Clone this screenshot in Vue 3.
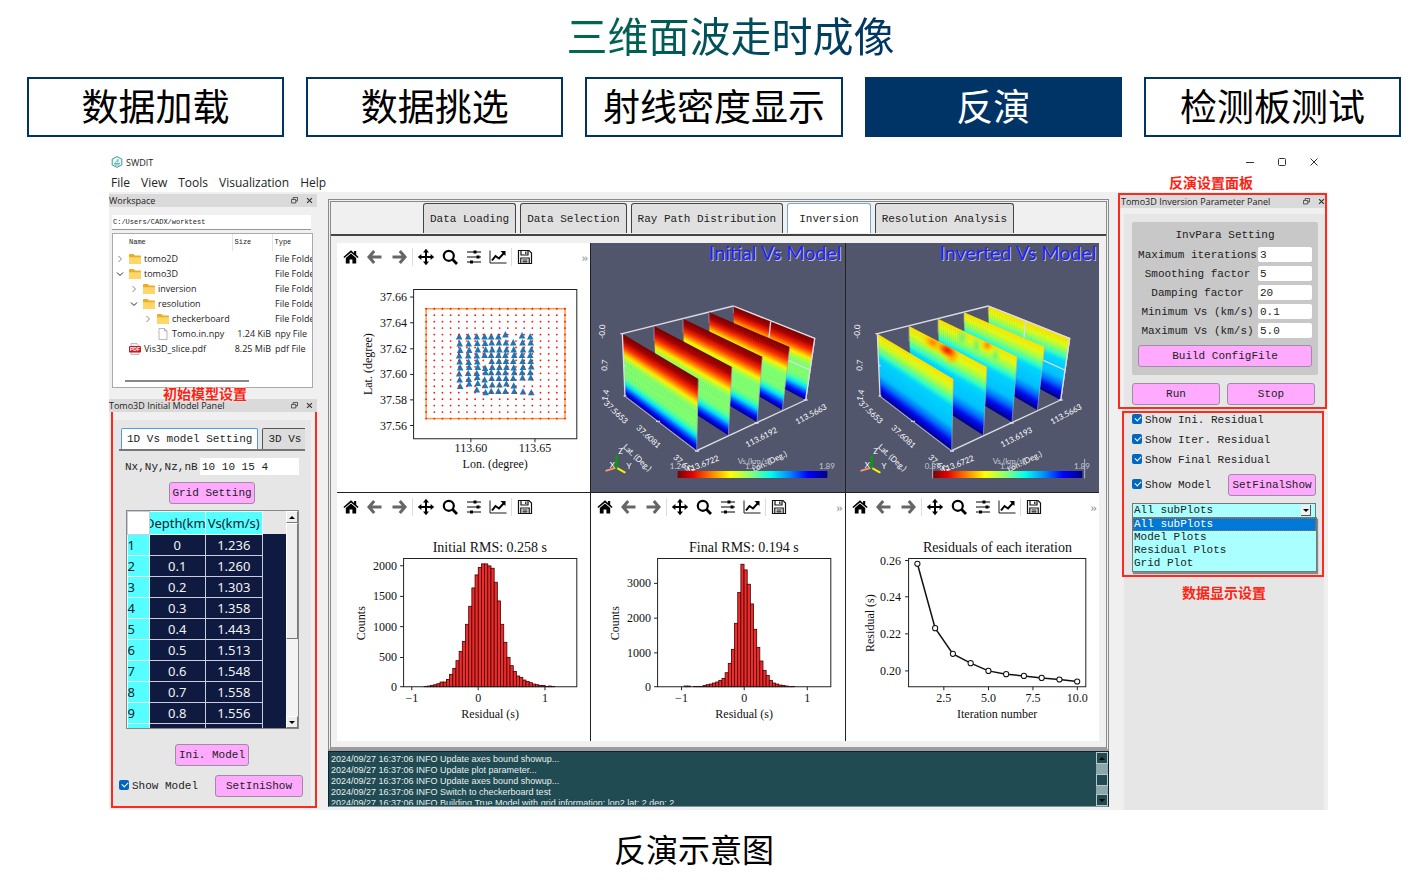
<script setup>
import { ref } from 'vue'

const steps = ['数据加载', '数据挑选', '射线密度显示', '反演', '检测板测试']
const menus = ['File', 'View', 'Tools', 'Visualization', 'Help']
const tabs = ['Data Loading', 'Data Selection', 'Ray Path Distribution', 'Inversion', 'Resolution Analysis']

const files = [
  { name: 'tomo2D', depth: 0, kind: 'folder', open: false, size: '', type: 'File Folder' },
  { name: 'tomo3D', depth: 0, kind: 'folder', open: true, size: '', type: 'File Folder' },
  { name: 'inversion', depth: 1, kind: 'folder', open: false, size: '', type: 'File Folder' },
  { name: 'resolution', depth: 1, kind: 'folder', open: true, size: '', type: 'File Folder' },
  { name: 'checkerboard', depth: 2, kind: 'folder', open: false, size: '', type: 'File Folder' },
  { name: 'Tomo.in.npy', depth: 2, kind: 'file', size: '1.24 KiB', type: 'npy File' },
  { name: 'Vis3D_slice.pdf', depth: 0, kind: 'pdf', size: '8.25 MiB', type: 'pdf File' },
]

const layers = [
  ['0', '1.236'], ['0.1', '1.260'], ['0.2', '1.303'], ['0.3', '1.358'], ['0.4', '1.443'],
  ['0.5', '1.513'], ['0.6', '1.548'], ['0.7', '1.558'], ['0.8', '1.556'],
]

const path = ref('C:/Users/CADX/worktest')
const gridSize = ref('10 10 15 4')
const params = ref([
  { id: 'iter', label: 'Maximum iterations', value: '3' },
  { id: 'smooth', label: 'Smoothing factor', value: '5' },
  { id: 'damp', label: 'Damping factor', value: '20' },
  { id: 'vmin', label: 'Minimum Vs (km/s)', value: '0.1' },
  { id: 'vmax', label: 'Maximum Vs (km/s)', value: '5.0' },
])
const shows = ['Show Ini. Residual', 'Show Iter. Residual', 'Show Final Residual']
const plotSets = ['All subPlots', 'Model Plots', 'Residual Plots', 'Grid Plot']
const plotSet = ref('All subPlots')

const logs = [
  'Update axes bound showup...',
  'Update plot parameter...',
  'Update axes bound showup...',
  'Switch to checkerboard test',
  'Building True Model with grid information: lon2 lat: 2 dep: 2',
]

/* station map */
const gridDots = []
for (let i = 0; i < 18; i++) for (let j = 0; j < 18; j++) gridDots.push([89 + i * 8.16, 37.7 + j * 6.45])
const stationCols = [
  [122, [66, 73, 79.5, 85, 91, 97, 103, 109, 115.5]],
  [131, [66, 73, 79.5, 85, 91.5, 96.5, 102.5, 108.5, 113]],
  [139.6, [66, 72.5, 79, 85, 91, 96.5, 102.5, 106.5, 112.5, 119]],
  [147.4, [66, 72.5, 79, 84.5, 97.5, 101.8, 109, 114.8, 121.8]],
  [154, [66, 72, 79, 84.5, 90.6, 96.5, 101.8, 107.5, 114, 120.5]],
  [161.2, [66, 72, 79, 84.5, 90.6, 96.5, 101.8, 107.5, 114, 120.5]],
  [168.2, [64, 72, 79, 84.5, 90.6, 96.5, 101.8, 107.5, 113, 120.5]],
  [176, [72, 79, 84.5, 90.6, 97, 101.8, 107.5, 115, 120.5]],
  [184.8, [65, 72, 79, 84.5, 90.6, 96.5, 101.8, 107, 121]],
  [193, [66, 72, 79, 84.5, 90.6, 96, 101.8, 107, 121.8]],
]
const stations = stationCols.flatMap(([x, ys]) => ys.map((y, i) => [x + ((i * 7) % 3) * 0.5, y]))
const latTicks = [['37.66', 26], ['37.64', 51.7], ['37.62', 77.7], ['37.60', 103.3], ['37.58', 128.7], ['37.56', 154.3]]

/* histograms: bar heights are in thirds of a drawing unit */
const hists = [
  {
    title: 'Initial RMS: 0.258 s', x0: 87, step: 3.18,
    yt: [['0', 165.5], ['500', 136.3], ['1000', 105.5], ['1500', 75.3], ['2000', 44.7]],
    xt: [['−1', 74.7], ['0', 141], ['1', 207.7]],
    bars: [1, 2, 4, 6, 9, 14, 14, 22, 37, 55, 78, 106, 136, 187, 241, 296, 335, 357, 368, 368, 362, 355, 313, 257, 187, 133, 88, 63, 46, 32, 28, 20, 16, 12, 8, 6, 4, 4, 1, 2, 1],
  },
  {
    title: 'Final RMS: 0.194 s', x0: 93, step: 3.15,
    yt: [['0', 165.5], ['1000', 131.7], ['2000', 97], ['3000', 62.3]],
    xt: [['−1', 90.4], ['0', 153], ['1', 216]],
    bars: [2, 2, 0, 1, 1, 1, 4, 6, 8, 11, 14, 19, 25, 42, 70, 112, 190, 282, 367, 350, 307, 248, 172, 118, 77, 49, 34, 19, 11, 8, 5, 4, 2, 1, 1],
  },
]

const resid = [42.7, 107, 132.7, 142, 149.7, 153, 154.7, 156.7, 158.3, 160.3].map((y, i) => [71.3 + i * 17.73, y])
const residLine = resid.map(p => p.join(',')).join(' ')

/* volume slices, back to front */
const slices = [
  [[431, 198], [675, 295], [648, 480], [436, 367]],
  [[358, 217], [600, 321], [578, 510], [363, 383]],
  [[280, 236], [518, 350], [502, 546], [286, 417]],
  [[193, 258], [427, 381], [416, 586], [200, 446]],
  [[98, 281], [326, 417], [321, 632], [106, 468]],
]
const ramps = {
  initial: [[0, 120, 0, 0], [0.1, 165, 0, 0], [0.2, 250, 40, 0], [0.28, 255, 150, 0], [0.34, 255, 240, 0], [0.4, 170, 255, 70], [0.46, 128, 255, 112], [0.68, 128, 255, 112], [0.75, 60, 255, 180], [0.81, 0, 225, 255], [0.87, 0, 110, 255], [0.93, 0, 10, 250], [1, 0, 0, 140]],
  inverted: [[0, 255, 225, 0], [0.12, 225, 250, 20], [0.22, 150, 255, 90], [0.32, 50, 255, 200], [0.4, 0, 215, 255], [0.66, 0, 195, 255], [0.78, 0, 110, 255], [0.88, 0, 10, 240], [1, 0, 0, 135]],
}
function shade(ramp, t) {
  let i = 1
  while (i < ramp.length - 1 && ramp[i][0] < t) i++
  const a = ramp[i - 1], b = ramp[i]
  const f = (t - a[0]) / (b[0] - a[0])
  return `rgb(${[1, 2, 3].map(k => Math.round(a[k] + (b[k] - a[k]) * f)).join(',')})`
}
const mix = (p, q, t) => [p[0] + (q[0] - p[0]) * t, p[1] + (q[1] - p[1]) * t]
const STRIPS = 60
function strips([tl, tr, br, bl], ramp) {
  return Array.from({ length: STRIPS }, (_, i) => {
    const a = i / STRIPS, b = Math.min(1, (i + 1.6) / STRIPS)
    return {
      pts: [mix(tl, bl, a), mix(tr, br, a), mix(tr, br, b), mix(tl, bl, b)].map(p => p.join(',')).join(' '),
      fill: shade(ramp, (i + 0.5) / STRIPS),
    }
  })
}
const scenes = [
  { key: 'initial', title: 'Initial Vs Model', low: '1.24', mid: '1.56', lon: '113.6192' },
  { key: 'inverted', title: 'Inverted Vs Model', low: '0.87', mid: '1.38', lon: '113.6193' },
].map(s => ({ ...s, panels: slices.map(q => ({ outline: q.map(p => p.join(',')).join(' '), strips: strips(q, ramps[s.key]) })) }))

const tools = ['home', 'back', 'forward', 'sep', 'pan', 'zoom', 'sliders', 'chart', 'sep', 'save']
const cells = [
  { kind: 'map', more: true }, { kind: 'scene', scene: scenes[0] }, { kind: 'scene', scene: scenes[1] },
  { kind: 'hist', hist: hists[0], more: false }, { kind: 'hist', hist: hists[1], more: true }, { kind: 'line', more: true },
]
</script>

<template>
  <main class="page">
    <h1 class="title"><span>三维面波走时成像</span></h1>
    <nav class="steps">
      <button v-for="s in steps" :key="s" type="button" class="step" :class="{ on: s === '反演' }">{{ s }}</button>
    </nav>

    <section class="window">
      <header class="titlebar">
        <svg class="logo" viewBox="0 0 12 12"><path d="M6 .6 10.8 3v6L6 11.4 1.2 9V3z" fill="#e6f6f5" stroke="#3f9a9c" /><path d="M3 7.5h6M3.4 9h5M4.4 6.6 7.4 3M6 6.2 8 4.6" stroke="#4a9fa5" stroke-width=".8" fill="none" /></svg>
        <span>SWDIT</span>
        <div class="winbtns">
          <button type="button" aria-label="Minimize"><svg viewBox="0 0 10 10"><path d="M1 5.5h8" /></svg></button>
          <button type="button" aria-label="Maximize"><svg viewBox="0 0 10 10"><rect x="1.5" y="1.5" width="7" height="7" rx="1" /></svg></button>
          <button type="button" aria-label="Close"><svg viewBox="0 0 10 10"><path d="M1.5 1.5l7 7M8.5 1.5l-7 7" /></svg></button>
        </div>
      </header>
      <nav class="menubar">
        <button v-for="m in menus" :key="m" type="button">{{ m }}</button>
        <strong class="note push">反演设置面板</strong>
      </nav>

      <div class="body">
        <aside class="left">
          <div class="dock"><span>Workspace</span><i class="dockbtns"><svg viewBox="0 0 8 8"><path d="M2.5 2.5v-2h5v4h-2M.5 2.8h5v4h-5z" /></svg><svg viewBox="0 0 8 8"><path class="x" d="M1.2 1.2l5.6 5.6M6.8 1.2 1.2 6.8" /></svg></i></div>
          <input v-model="path" class="path" aria-label="Workspace path" />
          <div class="tree">
            <table>
              <thead><tr><th class="cn">Name</th><th class="cs">Size</th><th>Type</th></tr></thead>
              <tbody>
                <tr v-for="f in files" :key="f.name">
                  <td>
                    <div class="fname" :class="'d' + f.depth">
                      <svg class="chev" viewBox="0 0 8 8"><path v-if="f.kind === 'folder' && f.open" class="dark" d="M1 2.5 4 5.5 7 2.5" /><path v-else-if="f.kind === 'folder'" d="M2.5 1 5.5 4 2.5 7" /></svg>
                      <svg class="ficon" viewBox="0 0 12 12">
                        <template v-if="f.kind === 'folder'"><path d="M0 2q0-1 1-1h3.5L6 2.5h5q1 0 1 1V10q0 1-1 1H1q-1 0-1-1z" fill="#eaae24" /><path d="M0 4.2h12V10q0 1-1 1H1q-1 0-1-1z" fill="#ffd667" /></template>
                        <path v-else-if="f.kind === 'file'" d="M2 .5h5.5L10 3v8.5H2zM7.5.5V3H10" fill="#fff" stroke="#999" stroke-width=".7" />
                        <template v-else><path d="M2 .5h6L10 2.5v9H2z" fill="#eee" stroke="#999" stroke-width=".6" /><rect y="3" width="12" height="6.5" rx="1" fill="#c41a1f" /><text x="6" y="8" class="pdf">PDF</text></template>
                      </svg>
                      <span>{{ f.name }}</span>
                    </div>
                  </td>
                  <td class="size">{{ f.size }}</td>
                  <td>{{ f.type }}</td>
                </tr>
              </tbody>
            </table>
            <div class="hbar"></div>
          </div>

          <div class="dock second">
            <span>Tomo3D Initial Model Panel</span><i class="dockbtns"><svg viewBox="0 0 8 8"><path d="M2.5 2.5v-2h5v4h-2M.5 2.8h5v4h-5z" /></svg><svg viewBox="0 0 8 8"><path class="x" d="M1.2 1.2l5.6 5.6M6.8 1.2 1.2 6.8" /></svg></i>
            <strong class="note over">初始模型设置</strong>
          </div>
          <div class="redbox model">
            <div class="inner">
              <div class="subtabs"><button type="button" class="on">1D Vs model Setting</button><button type="button" class="cut">3D Vs model</button></div>
              <div class="nrow"><label for="nx">Nx,Ny,Nz,nB</label><input id="nx" v-model="gridSize" /></div>
              <button type="button" class="pink w85">Grid Setting</button>
              <div class="sheet">
                <table>
                  <thead><tr><td class="corner"></td><th><span>Depth(km)</span></th><th><span>Vs(km/s)</span></th></tr></thead>
                  <tbody>
                    <tr v-for="(r, i) in layers" :key="i"><th>{{ i + 1 }}</th><td>{{ r[0] }}</td><td>{{ r[1] }}</td></tr>
                    <tr><th></th><td></td><td></td></tr>
                  </tbody>
                </table>
                <div class="sfill"></div>
                <div class="vbar"><i class="up"></i><i class="thumb"></i><i class="down"></i></div>
              </div>
              <button type="button" class="pink w73">Ini. Model</button>
              <div class="lastrow"><label><input type="checkbox" checked />Show Model</label><button type="button" class="pink w88">SetIniShow</button></div>
            </div>
          </div>
        </aside>

        <section class="center">
          <div class="frame">
            <div class="tabs"><button v-for="t in tabs" :key="t" type="button" :class="{ on: t === 'Inversion' }">{{ t }}</button></div>
            <div class="pane">
              <div class="plots">
                <div v-for="(c, n) in cells" :key="n" class="cell">
                  <div v-if="c.kind !== 'scene'" class="tools">
                    <template v-for="(t, k) in tools" :key="k">
                      <i v-if="t === 'sep'" class="sep"></i>
                      <button v-else type="button" :aria-label="t">
                        <svg viewBox="0 0 18 18">
                          <g v-if="t === 'home'"><path d="M9 2.2 1.4 9l1 1.1L9 4.4l6.6 5.7 1-1.1-2.4-2.2V3h-2.1v2z" /><path d="M9 5.6 3.8 10v5.6h3.8v-4h2.8v4h3.8V10z" /></g>
                          <path v-else-if="t === 'back'" class="gray" d="M8.2 3 3 9l5.2 6M3.4 9H15.5" />
                          <path v-else-if="t === 'forward'" class="gray" d="M9.8 3 15 9l-5.2 6M14.6 9H2.5" />
                          <path v-else-if="t === 'pan'" d="M9 .8 12 4.4H10V8h3.6V6L17.2 9l-3.6 3v-2H10v3.6h2L9 17.2 6 13.6h2V10H4.4v2L.8 9l3.6-3v2H8V4.4H6z" />
                          <g v-else-if="t === 'zoom'" fill="none" stroke="#000"><circle cx="7.8" cy="7.8" r="5" stroke-width="2.2" /><path d="M11.6 11.6l4.4 4.4" stroke-width="2.8" /></g>
                          <g v-else-if="t === 'sliders'"><path d="M2 4h14M2 9h14M2 14h14" stroke="#000" stroke-width="1.2" /><path d="M8.5 2.5h3v3h-3zM11.500 7.5h3v3h-3zM5 12.5h3v3h-3z" /></g>
                          <g v-else-if="t === 'chart'" fill="none" stroke="#000"><path d="M1 2.5V15H17.5" stroke-width=".9" /><path d="M3 12.5 6.5 8l3.5 2.5L15 5" stroke-width="2" /><path d="M11.5 3h5v5z" fill="#000" stroke="none" /></g>
                          <g v-else fill="none" stroke="#111" stroke-width="1.2"><path d="M2.5 2.5h10.5l2.5 2.5v10.5h-13z" /><path d="M5 2.5v4.5h7V2.5M9.8 3.5v2.5M4.8 15.5v-5.5h8.4v5.5M6.5 12h5M6.5 13.8h5" /></g>
                        </svg>
                      </button>
                    </template>
                    <span v-if="c.more" class="more">»</span>
                  </div>

                  <svg v-if="c.kind === 'map'" class="chart" viewBox="0 0 253 220">
                    <path class="ax" d="M76.5 18.5H239.5V167.5H76.5z" />
                    <g v-for="t in latTicks" :key="t[0]"><path class="ax" :d="`M73 ${t[1]}h3.5`" /><text class="tick end" x="70" :y="t[1] + 4">{{ t[0] }}</text></g>
                    <path class="ax" d="M133.7 167.5v3.5M197.7 167.5v3.5" />
                    <text class="tick mid" x="133.7" y="181">113.60</text><text class="tick mid" x="197.7" y="181">113.65</text>
                    <text class="lab mid" x="158" y="197">Lon. (degree)</text>
                    <text class="lab mid" transform="translate(35 93) rotate(-90)">Lat. (degree)</text>
                    <rect x="89" y="37.7" width="138.7" height="109.7" fill="none" stroke="#ff9a3c" stroke-width="1.5" />
                    <path v-for="(s, i) in stations" :key="i" :d="`M${s[0]} ${s[1] - 4}l3.300 6.400h-6.600z`" fill="#1f77b4" />
                    <circle v-for="(d, i) in gridDots" :key="'d' + i" :cx="d[0]" :cy="d[1]" r=".9" fill="#f11" />
                  </svg>

                  <svg v-else-if="c.kind === 'hist'" class="chart" viewBox="0 0 253 220">
                    <text class="head mid" x="152.7" y="31">{{ c.hist.title }}</text>
                    <rect v-for="(b, i) in c.hist.bars" :key="i" :x="c.hist.x0 + i * c.hist.step" :y="165.5 - b / 3" :width="c.hist.step" :height="b / 3" fill="#ee2c2c" stroke="#400" stroke-width=".8" />
                    <path class="ax" d="M66.5 37.5H239.5V165.5H66.5z" />
                    <g v-for="t in c.hist.yt" :key="t[0]"><path class="ax" :d="`M63 ${t[1]}h3.5`" /><text class="tick end" x="60" :y="t[1] + 4">{{ t[0] }}</text></g>
                    <g v-for="t in c.hist.xt" :key="'x' + t[0]"><path class="ax" :d="`M${t[1]} 165.5v3.5`" /><text class="tick mid" :x="t[1]" y="181">{{ t[0] }}</text></g>
                    <text class="lab mid" x="153" y="197">Residual (s)</text>
                    <text class="lab mid" transform="translate(28 102) rotate(-90)">Counts</text>
                  </svg>

                  <svg v-else-if="c.kind === 'line'" class="chart" viewBox="0 0 253 220">
                    <text class="head mid" x="151.3" y="31">Residuals of each iteration</text>
                    <path class="ax" d="M62.5 37.5H239.5V165.5H62.5z" />
                    <g v-for="t in [['0.26', 39.5], ['0.24', 75.7], ['0.22', 112.7], ['0.20', 149.7]]" :key="t[0]"><path class="ax" :d="`M59 ${t[1]}h3.5`" /><text class="tick end" x="55" :y="t[1] + 4">{{ t[0] }}</text></g>
                    <g v-for="t in [['2.5', 97.7], ['5.0', 142.3], ['7.5', 186.7], ['10.0', 231]]" :key="t[0]"><path class="ax" :d="`M${t[1]} 165.5v3.5`" /><text class="tick mid" :x="t[1]" y="181">{{ t[0] }}</text></g>
                    <text class="lab mid" x="151" y="197">Iteration number</text>
                    <text class="lab mid" transform="translate(28 102) rotate(-90)">Residual (s)</text>
                    <polyline :points="residLine" fill="none" stroke="#111" stroke-width="1.5" />
                    <circle v-for="p in resid" :key="p[0]" :cx="p[0]" :cy="p[1]" r="2.6" fill="#fff" stroke="#111" stroke-width="1" />
                  </svg>

                  <svg v-else class="chart scene" viewBox="4 9 760 747">
                    <defs>
                      <linearGradient :id="'bar-' + c.scene.key"><stop offset="0" stop-color="#7a0000" /><stop offset=".1" stop-color="#e80000" /><stop offset=".22" stop-color="#ff7a00" /><stop offset=".35" stop-color="#ffff00" /><stop offset=".5" stop-color="#80ff80" /><stop offset=".62" stop-color="#00ffee" /><stop offset=".75" stop-color="#0088ff" /><stop offset=".87" stop-color="#0000ff" /><stop offset="1" stop-color="#000088" /></linearGradient>
                      <radialGradient id="hot"><stop offset="0" stop-color="#f01000" /><stop offset=".35" stop-color="#ff4a00" stop-opacity=".9" /><stop offset=".7" stop-color="#ffb000" stop-opacity=".7" /><stop offset="1" stop-color="#ffe000" stop-opacity="0" /></radialGradient>
                      <radialGradient id="warm"><stop offset="0" stop-color="#ff8200" /><stop offset=".5" stop-color="#ffb400" stop-opacity=".7" /><stop offset="1" stop-color="#ffe000" stop-opacity="0" /></radialGradient>
                      <radialGradient id="cool"><stop offset="0" stop-color="#60f080" stop-opacity=".9" /><stop offset="1" stop-color="#90ff60" stop-opacity="0" /></radialGradient>
                      <clipPath id="cut3"><polygon :points="c.scene.panels[2].outline" /></clipPath>
                      <clipPath id="cut2"><polygon :points="c.scene.panels[3].outline" /></clipPath>
                    </defs>
                    <path class="edge" d="M431 198 675 295 648 480M98 281 431 198M648 480 321 632 106 468" />
                    <g v-for="(p, i) in c.scene.panels" :key="i">
                      <polygon v-for="(s, k) in p.strips" :key="k" :points="s.pts" :fill="s.fill" />
                      <g v-if="i === 0"><path class="edge" d="M431 198 675 295 648 480M543 245l-5 48M590 358l70 32" /></g>
                      <g v-if="c.scene.key === 'inverted' && i === 2" clip-path="url(#cut3)">
                        <ellipse cx="352" cy="292" rx="22" ry="34" fill="url(#cool)" /><ellipse cx="395" cy="318" rx="18" ry="34" fill="url(#cool)" /><ellipse cx="428" cy="316" rx="22" ry="22" fill="url(#warm)" /><ellipse cx="452" cy="348" rx="18" ry="30" fill="url(#cool)" />
                      </g>
                      <g v-if="c.scene.key === 'inverted' && i === 3" clip-path="url(#cut2)">
                        <ellipse cx="268" cy="307" rx="42" ry="26" fill="url(#warm)" transform="rotate(30 268 307)" /><ellipse cx="264" cy="308" rx="28" ry="18" fill="url(#warm)" transform="rotate(30 264 308)" />
                        <ellipse cx="322" cy="348" rx="26" ry="28" fill="url(#warm)" /><ellipse cx="308" cy="331" rx="40" ry="24" fill="url(#hot)" transform="rotate(30 308 331)" />
                      </g>
                    </g>
                    <path class="edge" d="M98 281l8 187M92 281h12M100 377h8M102 468h8M199 544h12M495 549h12M316 633h12M642 480h12" />
                    <path class="thin" d="M193 258v45M280 236v42M358 217v32M431 198v22M326 417l-5 215M427 381l-11 205M518 350l-16 196M600 321l-22 189M321 632l-215-164" />
                    <g class="three">
                      <text transform="translate(46 275) rotate(-88)">-0.0</text><text transform="translate(53 376) rotate(-86)">0.7</text><text transform="translate(56 467) rotate(-80)">1.4</text>
                      <text transform="translate(73 522) rotate(44)">37.5653</text><text transform="translate(171 596) rotate(43)">37.6081</text><text transform="translate(282 684) rotate(42)">37.6510</text>
                      <text transform="translate(342 680) rotate(-22)">113.6722</text><text transform="translate(519 599) rotate(-27)">{{ c.scene.lon }}</text><text transform="translate(668 530) rotate(-28)">113.5663</text>
                      <text transform="translate(137 659) rotate(43)">Lat. (Deg.)</text><text transform="translate(543 672) rotate(-26)">Lon. (Deg.)</text>
                      <text x="93" y="642">Z</text><text x="68" y="684">X</text><text x="118" y="688">Y</text>
                    </g>
                    <g class="three dim"><text x="492" y="671">Vs (km/s)</text><text x="264" y="688">{{ c.scene.low }}</text><text x="490" y="688">{{ c.scene.mid }}</text><text x="712" y="688">1.89</text></g>
                    <rect x="264" y="693" width="449" height="21" :fill="`url(#bar-${c.scene.key})`" />
                    <path v-if="c.scene.key === 'inverted'" d="M720 657v58M264 668v47" stroke="#b4b6c2" stroke-width="3" />
                    <g fill="none" stroke-width="6" stroke-linecap="round"><path d="M80 683 50 692" stroke="#ff9673" /><path d="M80 683l25 14" stroke="#f6f600" /><path d="M80 683l2-34" stroke="#0a9a10" stroke-width="8" /></g>
                    <text class="big back" x="758" y="64">{{ c.scene.title }}</text><text class="big" x="755" y="61">{{ c.scene.title }}</text>
                  </svg>
                </div>
              </div>
            </div>
          </div>
          <div class="log">
            <div class="lines"><p v-for="(l, i) in logs" :key="i">2024/09/27 16:37:06 INFO {{ l }}</p></div>
            <div class="logbar"><i class="up"></i><i class="thumb"></i><i class="down"></i></div>
          </div>
        </section>

        <aside class="right">
          <div class="redbox inv">
            <div class="dock"><span>Tomo3D Inversion Parameter Panel</span><i class="dockbtns"><svg viewBox="0 0 8 8"><path d="M2.5 2.5v-2h5v4h-2M.5 2.8h5v4h-5z" /></svg><svg viewBox="0 0 8 8"><path class="x" d="M1.2 1.2l5.6 5.6M6.8 1.2 1.2 6.8" /></svg></i></div>
            <div class="invbody">
              <div class="group">
                <h2>InvPara Setting</h2>
                <div v-for="p in params" :key="p.id" class="prow"><label :for="p.id">{{ p.label }}</label><input :id="p.id" v-model="p.value" /></div>
                <button type="button" class="pink">Build ConfigFile</button>
              </div>
              <div class="runrow"><button type="button" class="pink">Run</button><button type="button" class="pink">Stop</button></div>
            </div>
          </div>
          <div class="rest">
            <div class="redbox disp">
              <label v-for="s in shows" :key="s"><input type="checkbox" checked />{{ s }}</label>
              <div class="mrow"><label><input type="checkbox" checked />Show Model</label><button type="button" class="pink w88">SetFinalShow</button></div>
              <div class="combo">
                <select v-model="plotSet" aria-label="Plots shown"><option v-for="p in plotSets" :key="p">{{ p }}</option></select>
                <i class="drop"></i>
                <ul><li v-for="p in plotSets" :key="p" :class="{ on: p === plotSet }">{{ p }}</li></ul>
              </div>
            </div>
            <strong class="note">数据显示设置</strong>
          </div>
        </aside>
      </div>
    </section>
    <p class="caption">反演示意图</p>
  </main>
</template>

<style>
body { margin: 0; background: #fff; }
</style>

<style scoped>
* { box-sizing: border-box; }
button, input, select { font: inherit; color: inherit; margin: 0; padding: 0; border: 0; background: none; border-radius: 0; min-width: 0; }
i { font-style: normal; }
.page { font-family: "Open Sans", "Noto Sans CJK SC", sans-serif; color: #222; }
.title { margin: 0; height: 77px; padding: 6px 0 0 44px; text-align: center; font: 400 41px/56px "Noto Sans CJK SC", sans-serif; }
.title span { background: linear-gradient(90deg, #006b4f, #003366); background-clip: text; -webkit-background-clip: text; color: transparent; }
.steps { display: grid; grid-template-columns: repeat(5, 1fr); gap: 22px; padding: 0 16px 0 27px; }
.step { height: 60px; border: 2px solid #003366; background: #fff; color: #000; font: 400 37px/52px "Noto Sans CJK SC", sans-serif; padding-bottom: 4px; white-space: nowrap; }
.step.on { background: #003366; color: #fff; }

.window { margin: 13px 89px 0 109px; }
.titlebar { display: flex; align-items: center; height: 24px; padding-left: 2px; gap: 3px; font-size: 9px; }
.logo { width: 12px; height: 12px; }
.winbtns { margin-left: auto; display: flex; gap: 22px; padding-right: 9px; }
.winbtns button { width: 10px; height: 10px; display: flex; }
.winbtns svg { width: 10px; height: 10px; fill: none; stroke: #333; }
.menubar { display: flex; align-items: center; height: 18px; gap: 11px; padding: 0 75px 0 2px; font-size: 12px; line-height: 18px; }
.note { color: #f21; font: 700 14px/18px "Noto Sans CJK SC", sans-serif; white-space: nowrap; }
.push { margin-left: auto; line-height: 16px; padding-bottom: 2px; }
.body { display: grid; grid-template-columns: 208px minmax(0, 1fr) 210px; background: #f0f0f0; padding-top: 2px; font: 11px/14px "Liberation Mono", monospace; }

.dock { display: flex; align-items: center; justify-content: space-between; height: 13px; background: #dadada; font: 9px/13px "Open Sans", sans-serif; position: relative; white-space: nowrap; }
.dockbtns { display: flex; gap: 8px; padding-right: 4px; }
.dockbtns svg { width: 7px; height: 7px; fill: none; stroke: #333; stroke-width: .9; }
.dockbtns .x { stroke-width: 1.3; }
.path { display: block; width: 199px; height: 15px; margin: 8px 0 3px 3px; background: #fff; border-bottom: 1px solid #999; padding-left: 1px; font-size: 7px; }
.tree { margin-left: 3px; width: 201px; height: 155px; background: #fff; border: 1px solid #aaa; overflow: hidden; position: relative; }
.tree table { border-collapse: collapse; table-layout: fixed; width: 212px; font: 9px/15px "Open Sans", sans-serif; }
.tree th { font: 7px/17px "Liberation Mono", monospace; font-weight: 400; text-align: left; padding: 0 0 0 2px; border-left: 1px solid #e4e4e4; }
.tree th.cn { width: 119px; padding-left: 16px; border: 0; }
.tree th.cs { width: 40px; }
.tree td { padding: 0 0 0 3px; height: 15px; white-space: nowrap; }
.tree td:first-child { padding: 0; }
.tree .size { text-align: right; padding: 0 1px 0 0; }
.fname { display: flex; align-items: center; padding-left: 3px; }
.fname.d1 { padding-left: 17px; }
.fname.d2 { padding-left: 31px; }
.chev { width: 8px; height: 8px; margin-right: 5px; fill: none; stroke: #888; }
.chev .dark { stroke: #222; }
.ficon { width: 12px; height: 12px; margin-right: 3px; }
.pdf { font: 700 5px "Liberation Sans", sans-serif; fill: #fff; text-anchor: middle; }
.hbar { position: absolute; left: 12px; bottom: 5px; width: 124px; height: 2px; background: #888; }
.second { margin-top: 11px; }
.over { position: absolute; left: 54px; top: -15px; text-shadow: 0 0 2px #fff, 0 0 2px #fff; }
.redbox { border: 2px solid #ff2a1e; }
.model { margin: -2px 0 2px 2px; width: 206px; padding: 8px 4px 0 0; }
.inner { background: #e6e6e6; display: flex; flex-direction: column; align-items: center; padding: 8px 6px 8px; height: 386px; }
.subtabs { align-self: stretch; display: flex; gap: 4px; border-bottom: 2px solid #777; padding-left: 2px; height: 23px; overflow: hidden; }
.subtabs button { height: 21px; flex: none; border: 1px solid #555; border-bottom: 0; border-radius: 2px 2px 0 0; background: #dcdcdc; padding: 0 5px; white-space: nowrap; }
.subtabs .on { background: #fff; border-color: #4a9fdc; }
.nrow { display: flex; gap: 5px; align-self: stretch; padding: 7px 6px 7px 6px; align-items: center; }
.nrow label { width: 70px; white-space: nowrap; font-size: 11px; }
.nrow input { flex: 1; height: 17px; background: #fff; padding-left: 2px; }
.pink { background: #ffaaff; border: 1px solid #9c8ea0; border-radius: 3px; height: 22px; line-height: 18px; white-space: nowrap; text-align: center; }
.w85 { width: 86px; }
.w73 { width: 74px; }
.w88 { width: 88px; }
.sheet { display: flex; width: 173px; height: 219px; margin: 6px 0 15px; border: 1px solid #888; overflow: hidden; background: #0e1a40; font: 13px/20px "Noto Sans", sans-serif; }
.sheet table { border-collapse: collapse; table-layout: fixed; width: 136px; flex: none; }
.sheet th, .sheet td { padding: 0; border: 1px solid #ccd; height: 21px; text-align: center; font-weight: 400; }
.sheet td { color: #f2f2f2; }
.sheet tbody th { background: #55ffff; color: #123; text-align: left; border-color: #e8ffff; }
.sheet thead th { background: #55ffff; height: 23px; color: #123; overflow: hidden; border-color: #e8ffff; }
.sheet thead th span { display: flex; justify-content: center; white-space: nowrap; }
.sheet .corner { width: 22px; background: #fff; }
.sfill { flex: 1; height: 23px; background: #e6e6e6; }
.vbar { width: 12px; background: #f3f3f3; display: flex; flex-direction: column; }
.up, .down, .thumb { display: flex; align-items: center; justify-content: center; background: #eee; border: 1px solid #fff; border-right-color: #777; border-bottom-color: #777; }
.up, .down { height: 12px; }
.down { margin-top: auto; }
.vbar .thumb { height: 116px; }
.up::after, .down::after { content: ""; border: 3px solid transparent; border-top-width: 0; border-bottom-color: #000; }
.down::after { border-top: 3px solid #000; border-bottom: 0; }
.lastrow { align-self: stretch; display: flex; justify-content: space-between; align-items: center; margin-top: 9px; padding-right: 2px; }
label { white-space: nowrap; }
input[type="checkbox"] { appearance: none; width: 10px; height: 10px; border-radius: 2px; background: #0067c0; vertical-align: -1px; margin-right: 3px; position: relative; }
input[type="checkbox"]::after { content: ""; position: absolute; left: 3px; top: 2px; width: 5px; height: 3px; border: solid #fff; border-width: 0 0 1px 1px; transform: rotate(-45deg); }

.center { display: flex; flex-direction: column; padding: 5px 9px 3px 11px; min-width: 0; }
.frame { border: 3px double #8a8a8a; border-bottom: 4px solid #9c9c9c; }
.tabs { display: flex; justify-content: center; gap: 4px; padding-top: 1px; height: 32px; }
.tabs button { height: 30px; padding: 0 6px; background: #e0e0e0; border: 1px solid #444; border-bottom: 0; border-radius: 3px 3px 0 0; white-space: nowrap; }
.tabs .on { background: #fff; border-color: #78a8c8; padding: 0 11px; }
.pane { border-top: 2px solid #444; padding: 7px 7px 6px 6px; }
.plots { display: grid; grid-template-columns: repeat(3, minmax(0, 1fr)); gap: 1px; background: #222; }
.cell { background: #fff; min-width: 0; overflow: hidden; }
.tools { display: flex; align-items: center; height: 28px; padding: 0 2px; }
.tools button { width: 24px; height: 24px; display: flex; align-items: center; justify-content: center; }
.tools svg { width: 18px; height: 18px; }
.gray { fill: none; stroke: #666; stroke-width: 3; }
.sep { width: 1px; height: 18px; margin: 0 1px; background: #ddd; }
.more { margin-left: auto; font: 13px/14px "Liberation Serif", serif; color: #888; }
.chart { display: block; width: 100%; height: auto; font-family: "Liberation Serif", serif; }
.scene { background: #52566c; font-family: "Lato", sans-serif; }
.ax { fill: none; stroke: #222; stroke-width: 1; }
.tick, .lab { font-size: 12px; fill: #111; }
.head { font-size: 14px; fill: #111; }
.mid { text-anchor: middle; }
.end { text-anchor: end; }
.edge { fill: none; stroke: #dcdce4; stroke-width: 4; }
.thin { fill: none; stroke: #a8a8b0; stroke-width: 2; }
.three { font-size: 24px; fill: #fff; text-anchor: middle; }
.dim { fill: #c8cad4; }
.big { font-size: 59px; fill: #2121f2; text-anchor: end; }
.back { fill: #c0c2d2; }
.log { flex: 1; display: flex; background: #204b52; color: #e8eeee; font: 9px/11px "Liberation Sans", sans-serif; border: 1px solid #123; border-bottom-color: #7f979b; min-height: 0; }
.lines { flex: 1; height: 53px; overflow: hidden; padding: 2px 2px 0; }
.lines p { margin: 0; white-space: nowrap; }
.logbar { width: 12px; background: #8ea7ab; display: flex; flex-direction: column; }
.logbar i { background: #204b52; border-color: #b8c6c8; }
.logbar .thumb { height: 12px; margin-top: 10px; }

.right { min-width: 0; display: flex; flex-direction: column; }
.inv { height: 216px; margin: -1px 1px 0 0; }
.inv .dock { padding-left: 1px; }
.inv .dock .dockbtns { padding-right: 0; }
.invbody { margin: 6px 0 0 4px; background: #e6e6e6; padding: 8px 8px 2px 8px; height: 193px; }
.group { background: #c8c8c8; border-radius: 2px; padding: 6px 6px 9px; height: 153px; width: 186px; }
.group h2 { margin: 0 0 5px; font: inherit; text-align: center; }
.prow { display: flex; height: 19px; gap: 1px; }
.prow label { width: 119px; text-align: center; line-height: 17px; }
.prow input { width: 54px; height: 15px; background: #fff; border-radius: 2px; padding-left: 2px; }
.group .pink { width: 100%; margin-top: 3px; }
.runrow { display: grid; grid-template-columns: 88px 88px; gap: 7px; margin-top: 8px; }
.rest { flex: 1; margin: 0 4px 0 6px; background: #e6e6e6; padding-top: 2px; display: flex; flex-direction: column; align-items: center; }
.disp { margin: 0 0 6px -2px; width: 202px; height: 166px; padding: 0 6px 0 8px; display: flex; flex-direction: column; }
.disp > label { height: 20px; line-height: 14px; }
.mrow { display: flex; align-items: center; justify-content: space-between; margin-top: 1px; }
.combo { position: relative; margin-top: 7px; }
.combo select { appearance: none; display: block; width: 184px; height: 15px; background: #aaffff; border: 1px solid #777; padding-left: 1px; line-height: 13px; }
.drop { position: absolute; right: 5px; top: 2px; width: 10px; height: 11px; background: #f0f0f0; display: flex; align-items: center; justify-content: center; border-right: 1px solid #555; border-bottom: 1px solid #555; }
.drop::after { content: ""; border: 3px solid transparent; border-top-color: #000; border-bottom: 0; }
.combo ul { position: absolute; left: 0; top: 14px; width: 185px; margin: 0; padding: 0 0 1px; list-style: none; background: #aaffff; border: 1px solid #777; box-shadow: 1px 2px 1px #888; }
.combo li { padding-left: 1px; line-height: 13px; height: 13px; }
.combo li.on { background: #0078d7; color: #fff; outline: 1px dotted #b87030; outline-offset: -1px; }
.caption { margin: 15px 0 0; padding-right: 29px; text-align: center; color: #000; font: 400 32px/46px "Noto Sans CJK SC", sans-serif; }
</style>
